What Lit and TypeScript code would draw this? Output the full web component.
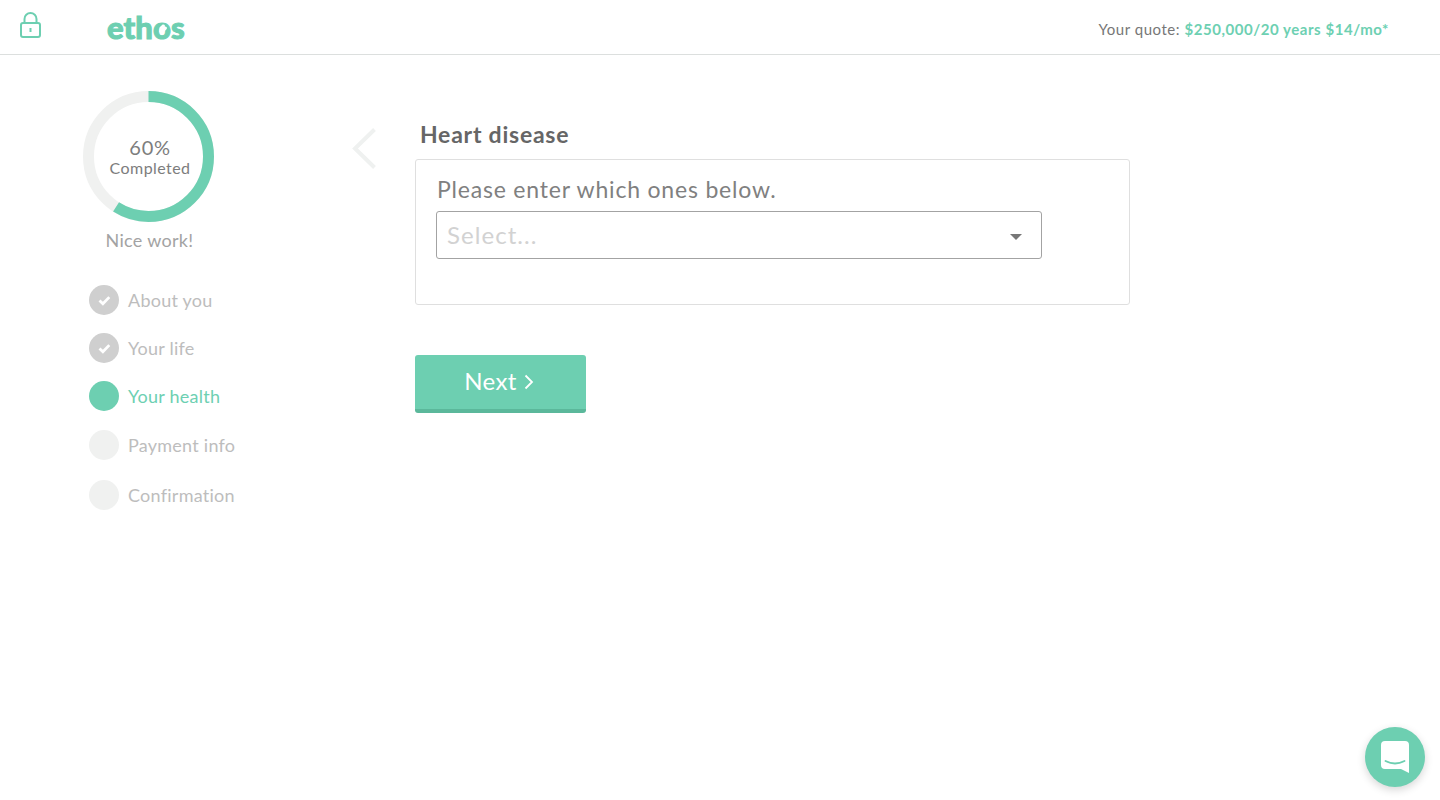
import { LitElement, html, css, svg } from "lit";
import { customElement } from "lit/decorators.js";

const check = svg`<svg width="13" height="11" viewBox="0 0 13 11"><path d="M1.5 5.5l3.4 3.2 6.4-6.6" fill="none" stroke="#fff" stroke-width="2.8"/></svg>`;

@customElement("app-root")
export class AppRoot extends LitElement {
  static styles = css`
    :host { display: block; height: 800px; position: relative; overflow: hidden; background: #fff;
      font-family: "Lato", "Liberation Sans", sans-serif; color: #808080; }
    * { box-sizing: border-box; }
    header { height: 55px; border-bottom: 1px solid #dcdfde; display: flex; align-items: flex-start; }
    .lock { margin: 12px 0 0 20px; width: 21px; height: 26px; display: block; }
    .logo { margin: 8px 0 0 66px; position: relative; font-size: 31px; line-height: 38px; font-weight: 900; color: #6dcfb1; letter-spacing: 0.1px; -webkit-text-stroke: 1px #6dcfb1; font-family: "Lato", sans-serif; }
    .heart { position: absolute; left: 51px; top: 16px; width: 9px; height: 9px; }
    .quote { margin: 20px 51px 0 auto; font-size: 15px; line-height: 19px; color: #777; letter-spacing: 0.54px; }
    .quote b { font-weight: 700; color: #6dd0b2; }
    .body { display: flex; align-items: flex-start; }
    aside { width: 350px; padding: 36px 0 0 83px; flex: none; }
    .ring { width: 131px; height: 131px; position: relative; }
    .ring svg { display: block; }
    .ring-text { position: absolute; inset: 0; display: flex; flex-direction: column; align-items: center; justify-content: center; }
    .pct { font-size: 20px; line-height: 22px; color: #7d7d7d; letter-spacing: 0.7px; padding-left: 3px; }
    .done { font-size: 16px; line-height: 20px; color: #7d7d7d; letter-spacing: 0.42px; padding-left: 3px; }
    .nice { width: 133px; text-align: center; margin-top: 7px; font-size: 18px; line-height: 22px; color: #a3a3a3; letter-spacing: 0.3px; }
    .steps { list-style: none; margin: 34px 0 0 6px; padding: 0; display: flex; flex-direction: column; }
    .steps li { display: flex; align-items: center; gap: 9px; height: 30px; margin-bottom: 18px; font-size: 18px; color: #bdbdbd; letter-spacing: 0.25px; white-space: nowrap; }
    .steps li.third { margin-bottom: 19px; }
    .steps li.late { margin-bottom: 20px; }
    .dot { width: 30px; height: 30px; border-radius: 50%; background: #f0f1f0; display: flex; align-items: center; justify-content: center; flex: none; }
    .done-step .dot { background: #cfcfcf; }
    .current { color: #6dd0b2 !important; }
    .current .dot { background: #6dcfb1; }
    .back { width: 65px; flex: none; padding-top: 72px; }
    .back svg { display: block; }
    main { padding-top: 64px; width: 715px; }
    h1 { margin: 0 0 10px 5px; font-size: 23px; line-height: 30px; font-weight: 700; color: #666; letter-spacing: 0.76px; }
    .card { height: 146px; border: 1px solid #dfdfdf; border-radius: 3px; padding: 14px 20px 0; }
    .prompt { font-size: 23px; line-height: 30px; color: #808080; letter-spacing: 0.8px; padding-left: 1px; }
    .select { margin-top: 7px; width: 606px; height: 48px; border: 1px solid #a3a3a3; border-radius: 3px; display: flex; align-items: center; justify-content: space-between; padding: 0 19px 1px 10px; font-size: 24px; color: #d2d2d2; letter-spacing: 1.05px; }
    .caret { width: 0; height: 0; border-left: 6.5px solid transparent; border-right: 6.5px solid transparent; border-top: 6.5px solid #777; margin-top: 4px; }
    button { display: flex; align-items: center; justify-content: center; gap: 7px; margin-top: 50px; width: 171px; height: 58px; padding: 0 3px 4px 0; border: 0; border-bottom: 4px solid #5bb89b; border-radius: 3px; background: #6dcfb1; color: #fff; font: inherit; font-size: 24px; letter-spacing: 0.4px; }
    button svg { margin-top: 3px; }
    .chat { position: absolute; left: 1365px; top: 727px; width: 60px; height: 60px; border-radius: 50%; background: #6dcfb1; box-shadow: 0 3px 8px rgba(0,0,0,.16); display: flex; align-items: center; justify-content: center; }
  `;

  render() {
    const r = 60, c = 2 * Math.PI * r;
    return html`
      <header>
        <svg class="lock" viewBox="0 0 21 26" fill="none" stroke="#6dcfb1" stroke-width="2">
          <path d="M4.5 11V7a6 6 0 0 1 12 0v4"/>
          <rect x="1" y="11" width="19" height="14" rx="2"/>
          <path d="M10.5 16v4"/>
        </svg>
        <div class="logo">ethos
          <svg class="heart" viewBox="0 0 14 14"><path d="M2 12.5 2.6 5 7.2 .8a2.6 2.6 0 0 1 3.4 3.2 2.6 2.6 0 0 1 3 3.6L9.4 12z" fill="#fff"/></svg>
        </div>
        <div class="quote">Your quote: <b>$250,000/20 years $14/mo*</b></div>
      </header>
      <div class="body">
        <aside>
          <div class="ring">
            <svg width="131" height="131" viewBox="0 0 131 131">
              <circle cx="65.5" cy="65.5" r="${r}" fill="none" stroke="#f0f1f0" stroke-width="11"/>
              <circle cx="65.5" cy="65.5" r="${r}" fill="none" stroke="#6dcfb1" stroke-width="11"
                stroke-dasharray="${c * 0.59} ${c}" transform="rotate(-90 65.5 65.5)"/>
            </svg>
            <div class="ring-text"><span class="pct">60%</span><span class="done">Completed</span></div>
          </div>
          <div class="nice">Nice work!</div>
          <ul class="steps">
            <li class="done-step"><span class="dot">${check}</span>About you</li>
            <li class="done-step"><span class="dot">${check}</span>Your life</li>
            <li class="current third"><span class="dot"></span>Your health</li>
            <li class="late"><span class="dot"></span>Payment info</li>
            <li><span class="dot"></span>Confirmation</li>
          </ul>
        </aside>
        <div class="back">
          <svg width="28" height="44" viewBox="0 0 28 44"><path d="M24.5 2.5 5 21.5l19.5 19" fill="none" stroke="#eff1f0" stroke-width="4"/></svg>
        </div>
        <main>
          <h1>Heart disease</h1>
          <div class="card">
            <div class="prompt">Please enter which ones below.</div>
            <div class="select"><span>Select...</span><span class="caret"></span></div>
          </div>
          <button>Next <svg width="10" height="16" viewBox="0 0 10 16"><path d="M1.5 1.5 8 8l-6.5 6.5" fill="none" stroke="#fff" stroke-width="1.8"/></svg></button>
        </main>
      </div>
      <div class="chat">
        <svg width="30" height="34" viewBox="0 0 30 34"><path d="M5 1h20a4 4 0 0 1 4 4v28l-8-4H5a4 4 0 0 1-4-4V5a4 4 0 0 1 4-4z" fill="#fff"/><path d="M5.5 21q9.5 5 19 0" fill="none" stroke="#6dcfb1" stroke-width="1.8" stroke-linecap="round"/></svg>
      </div>
    `;
  }
}
